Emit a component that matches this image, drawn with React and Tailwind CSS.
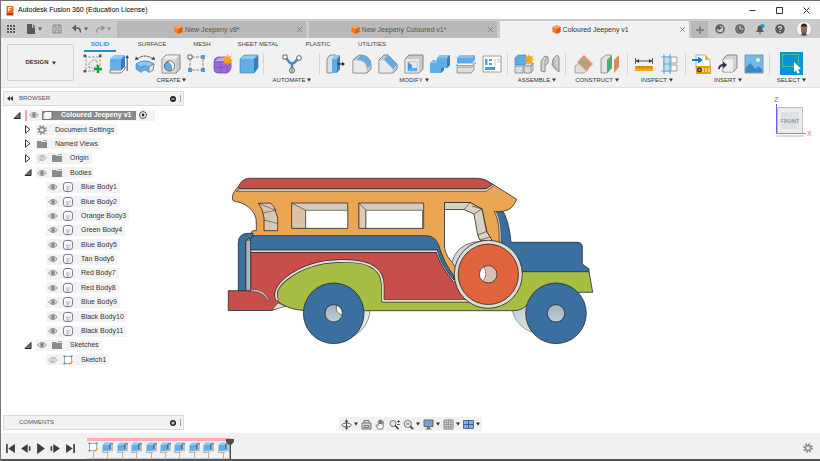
import React from "react";

const BLUE = "#5fade8";
const BLUE_D = "#2f7fc2";
const LINE = "#858585";

function Svg({ size = "w-5 h-5", box = "0 0 20 20", children }) {
  return (
    <svg className={`${size} block shrink-0`} viewBox={box} fill="none" aria-hidden="true">
      {children}
    </svg>
  );
}

function Caret({ className = "text-[#333]" }) {
  return (
    <svg className={`block h-1 w-1 shrink-0 ${className}`} viewBox="0 0 4 4" aria-hidden="true">
      <path d="M0 .5h4L2 3.8z" fill="currentColor" />
    </svg>
  );
}

function Cube({ size = "w-[9px] h-[9px]" }) {
  return (
    <Svg size={size} box="0 0 18 18">
      <path d="M9 0l8 4v10l-8 4-8-4V4z" fill="#f47b20" />
      <path d="M9 0l8 4-8 4-8-4z" fill="#ffa55c" />
      <path d="M9 8l8-4v10l-8 4z" fill="#dd5f0c" />
    </Svg>
  );
}

/* ---------- ribbon icons ---------- */

const icons = {
  sketch: (
    <Svg>
      <path d="M3 1v17M1 3h17M1 17h12M17 1v11" stroke="#909090" strokeWidth=".9" strokeDasharray="3 1" />
      <path d="M.5.5h2.500v2.500H.5zM16 .5h2.500v2.500H16zM.5 16h2.500v2.500H.5z" fill="#555" />
      <path d="M6 14V9l4-3h4v5l-3 3z" fill="#ececec" stroke="#858585" strokeWidth=".8" strokeDasharray="2 1" />
      <path d="M15 11v8M11 15h8" stroke="#18a03c" strokeWidth="2.6" />
    </Svg>
  ),
  extrude: (
    <Svg>
      <path d="M1 16h11l4-4v3l-4 4H1z" fill="#f2f2f2" stroke="#777" strokeWidth=".9" />
      <path d="M1 5h11v11H1z" fill="#62aee9" />
      <path d="M12 5l4-4v11l-4 4z" fill={BLUE_D} />
      <path d="M1 5l4-4h11l-4 4z" fill="#8ac7f4" />
      <path d="M18.200 3v14" stroke="#444" />
      <path d="M16.500 4l1.700-3 1.700 3z" fill="#333" />
    </Svg>
  ),
  revolve: (
    <Svg>
      <path d="M2 5Q10-1 18 5" stroke="#555" strokeDasharray="3 .6" />
      <path d="M0 6l1-3.500 2.700 2.700zM20 6l-1-3.500-2.700 2.700z" fill="#333" />
      <path d="M1 10Q10 4 19 10l-1 6-4 2.500Q10 14 6 18.500L1 15z" fill={BLUE} stroke="#3d82bb" strokeWidth=".6" />
      <path d="M1 10Q10 4 19 10l-5 3Q10 10 6 13z" fill="#8ac7f4" stroke="#3d82bb" strokeWidth=".5" />
      <path d="M14 13l5-3-1 6-4 2.500z" fill="#e9e9e9" stroke="#777" strokeWidth=".7" />
    </Svg>
  ),
  hole: (
    <Svg>
      <path d="M1 5l4-4h14v14l-4 4H1z" fill="#c9c9c9" stroke={LINE} />
      <path d="M1.500 5l3.700-3.500h13L15 5z" fill="#efefef" />
      <path d="M1.500 5.200h13.300v13.300H1.500z" fill="#dedede" />
      <circle cx="8.500" cy="12" r="5" fill={BLUE} stroke="#666" />
      <path d="M8.500 7a5 5 0 015 5 5 5 0 01-3 4.600Q11.500 9 6 8z" fill="#fff" stroke="#666" strokeWidth=".6" />
    </Svg>
  ),
  pattern: (
    <Svg>
      <path d="M5 3h9M3 5v9M5 16h9M16 5v9" stroke="#909090" strokeDasharray="3 1" />
      <path d="M1 1h4v4H1z" fill="#fff" stroke="#666" />
      <path d="M14 1h4v4h-4zM1 14h4v4H1zM14 14h4v4h-4z" fill="#4c9ee0" />
    </Svg>
  ),
  form: (
    <Svg>
      <path d="M1 8q0-4 4-5h7q5 1 6 5v6q-1 4-4 5H5q-4 0-4-4z" fill="#9a6bd6" stroke="#6b3fa8" strokeWidth=".7" />
      <path d="M2 8q3-4.500 6-4.500h5Q16 4 17 6l-3 2.500Q8 7 2 8z" fill="#c3a3ee" />
      <path d="M2 8q7-1 12 .5V18M8 7.500V19M1.500 13q7 1 12.500 0l3.500-2.500" stroke="#7c4fc0" strokeWidth=".8" />
      <path d="M14.500 0l1.200 3L18.500 1.700 17.400 4.600 20.200 6l-2.900 1.200 1.200 3-3-1.400-1.200 2.900-1.200-2.900-2.900 1.300 1.300-2.900L8.700 6l2.800-1.300-1.200-3 3 1.300z" fill="#f9a51a" />
    </Svg>
  ),
  box: (
    <Svg>
      <path d="M1 5l4-4h14l-4 4z" fill="#8ac7f4" />
      <path d="M15 5l4-4v13l-4 5z" fill={BLUE_D} />
      <path d="M1 5h14v14H1z" fill="#62aee9" />
      <path d="M1 5l4-4h14v13l-4 5H1z" stroke="#3d82bb" strokeWidth=".6" />
    </Svg>
  ),
  automate: (
    <Svg>
      <path d="M4 4l4 5h4l4-4M10 9v5" stroke="#4d8fc2" strokeWidth="2.600" />
      <path d="M1 1h4v4H1z" fill="#fff" stroke="#666" />
      <circle cx="17" cy="4" r="2.400" fill="#fff" stroke="#666" />
      <circle cx="10" cy="16.500" r="2.600" fill="#ddd" stroke="#666" />
      <circle cx="10" cy="16.500" r=".9" fill="#666" />
    </Svg>
  ),
  press: (
    <Svg>
      <path d="M1 5l3-4h6v14l-4 4H1z" fill="#dedede" stroke={LINE} strokeWidth=".9" />
      <path d="M6 5l3-4h5l-3 4z" fill="#8ac7f4" />
      <path d="M6 5h5v14H6z" fill={BLUE} />
      <path d="M11 5l3-4v14l-3 4z" fill={BLUE_D} />
      <path d="M12 10h5" stroke="#222" strokeWidth="1.200" />
      <path d="M16 8l3 2-3 2z" fill="#222" />
    </Svg>
  ),
  fillet: (
    <Svg>
      <path d="M1 6l6-5q12 0 12 10v4l-4 4H1z" fill="#c9c9c9" stroke={LINE} />
      <path d="M1.500 6.500h3.500q9 1 9.500 8V18.500H1.500z" fill="#e9e9e9" />
      <path d="M9 1q10 1 10 10l-4 3Q15 6 5 5.500z" fill={BLUE} />
    </Svg>
  ),
  chamfer: (
    <Svg>
      <path d="M1 6l5-5h4l9 9v5l-4 4H1z" fill="#c9c9c9" stroke={LINE} />
      <path d="M1.500 6.500H6l8.500 8v4h-13z" fill="#e9e9e9" />
      <path d="M6 5l4-4 9 9-4 5z" fill={BLUE} />
    </Svg>
  ),
  shell: (
    <Svg>
      <path d="M1 5l4-4h14v14l-4 4H1z" fill="#c9c9c9" stroke={LINE} />
      <path d="M1.500 5h13.500v13.500H1.500z" fill="#ebebeb" />
      <path d="M4 8h9v9H4z" fill="#fff" stroke="#888" strokeWidth=".6" />
      <path d="M4 8l4 3v3l-4 3z" fill="#4796d8" />
      <path d="M4 17l4-3h5v3z" fill={BLUE} />
      <path d="M8 8h5v6H8z" fill="#d7ebfb" />
    </Svg>
  ),
  combine: (
    <Svg>
      <path d="M7 4l3-3h10v10l-3 3h-3v2l-3 3H0V9l3-3h4z" fill={BLUE} />
      <path d="M7 4l3-3h10l-3 3zM0 9l3-3h4v3z" fill="#84c1f0" />
      <path d="M17 4l3-3v10l-3 3zM11 14h3v2l-3 3z" fill={BLUE_D} />
    </Svg>
  ),
  split: (
    <Svg>
      <path d="M1 13h14l3-2v5l-3 3H1z" fill="#ddd" stroke={LINE} strokeWidth=".8" />
      <path d="M1 4l3-3h15v5l-3 3H1z" fill={BLUE} />
      <path d="M1 4l3-3h15l-3 3z" fill="#84c1f0" />
      <path d="M0 11.500l3-2.500h17l-4 2.500z" fill="#fff" stroke="#4c9ee0" strokeWidth=".8" />
    </Svg>
  ),
  params: (
    <Svg>
      <path d="M1 2h18v16H1z" fill="#fff" stroke="#9a9a9a" />
      <path d="M3 5h2.500v6H3zM7 5h3v2H7zM7 9h3v2H7zM3 13h10v3H3z" fill="#4c9ee0" />
      <path d="M13 5v6M15 5h2v3h-2" stroke="#c4c4c4" />
    </Svg>
  ),
  newComponent: (
    <Svg>
      <path d="M1 4l3-3h8v8l-2 2H1z" fill={BLUE} stroke={BLUE_D} strokeWidth=".6" />
      <path d="M1 12h8v7H1zM10 12h7v7h-7zM10 12l2-3h7l-2 3M17 12l2-3v7l-2 3" fill="#dcdcdc" stroke={LINE} strokeWidth=".8" />
      <path d="M15 0l1.200 2.800L19 1.500 18 4.300l2 1.200-2 1 1 3-3-1.500L15 10l-1.300-2L11 9.200l1-2.700-2-1 2-1L11 1.500l2.800 1.300z" fill="#f9a51a" />
    </Svg>
  ),
  joint: (
    <Svg>
      <path d="M1 7l4-5 3 1v6l-3 3v6l-4-1zM19 18l-4-3-3-4 1-6 4-4 2 2z" fill="#d0d0d0" stroke={LINE} strokeWidth=".9" />
      <path d="M5 12V6l3-3M14 5v7l5 4" stroke="#9a9a9a" strokeWidth=".8" />
    </Svg>
  ),
  plane: (
    <Svg>
      <path d="M1 12l5-4h8v8l-4 3H1z" fill="#dedede" stroke="#999" strokeWidth=".8" />
      <path d="M3 8l7-7 9 9-7 7z" fill="#dd8c5e" fillOpacity=".9" />
      <path d="M5 9l4-4 4 4v4z" fill="#8db48d" />
    </Svg>
  ),
  midplane: (
    <Svg>
      <path d="M1 5l5-4h5v13l-4 5H1z" fill="#e4e4e4" stroke={LINE} strokeWidth=".8" />
      <path d="M7 6l5-5v13l-5 5z" fill="#4cae72" />
      <path d="M14 6l5-5v12l-5 6z" fill="#dd8c5e" />
    </Svg>
  ),
  measure: (
    <Svg>
      <path d="M1.500 4v6M18.500 4v6M2 7h16" stroke="#444" strokeWidth=".9" />
      <path d="M2 7l3-2v4zM18 7l-3-2v4z" fill="#333" />
      <path d="M1 12h18v5H1z" fill="#f4a61d" />
      <path d="M3 12v2M5 12v3M7 12v2M9 12v3M11 12v2M13 12v3M15 12v2M17 12v3" stroke="#8a5f0a" strokeWidth=".6" />
    </Svg>
  ),
  interference: (
    <Svg>
      <path d="M3 2h7v16H3z" fill="#bfe0f8" />
      <path d="M1 3h10M1 17h10M4 0v20M10 0v20M3 10h8" stroke="#5aa9e0" strokeWidth="1.100" />
      <path d="M11 3h6v6h-6zM11 11h6v6h-6z" fill="#f6f6f6" stroke="#999" strokeWidth=".9" />
    </Svg>
  ),
  svgIn: (
    <Svg>
      <path d="M4 1h9l5 5v9H4z" fill="#fff" stroke="#999" strokeWidth=".8" />
      <path d="M13 1v5h5z" fill="#f4b400" />
      <path d="M4 12h15v8H4z" fill="#e99d13" />
      <circle cx="7.500" cy="16" r="1.800" stroke="#333" strokeWidth="1.300" />
      <path d="M11 14v4M14 14v4M17 14v4" stroke="#fff" />
      <path d="M0 6h7" stroke="#0f7fd0" strokeWidth="2" />
      <path d="M6 2.500L11 6 6 9.500z" fill="#0f7fd0" />
    </Svg>
  ),
  insertMesh: (
    <Svg>
      <path d="M5 5l4-4h10v13l-4 4H5z" fill="#d2d2d2" stroke={LINE} />
      <path d="M5.500 5.300H15v12.400H5.500z" fill="#eee" />
      <path d="M1 15q0-4 5-4" stroke="#333" strokeWidth="1.800" />
      <path d="M5 7.500l4 3.500-4 3.500z" fill="#333" />
    </Svg>
  ),
  canvas: (
    <Svg>
      <path d="M1 1h18v18H1z" fill="#74b9ee" stroke="#8a98a5" />
      <path d="M1.500 14l5-5 5 6 3-3 4 4v2.500h-17z" fill="#3d86c2" />
      <circle cx="14" cy="6" r="2" fill="#fff6c0" />
    </Svg>
  ),
};

const groups = [
  { name: "CREATE", w: "w-[185px]", items: ["sketch", "extrude", "revolve", "hole", "pattern", "form", "box"] },
  { name: "AUTOMATE", w: "w-14", items: ["automate"] },
  { name: "MODIFY", w: "w-[188px]", items: ["press", "fillet", "chamfer", "shell", "combine", "split", "params"] },
  { name: "ASSEMBLE", w: "w-[58px]", items: ["newComponent", "joint"] },
  { name: "CONSTRUCT", w: "w-[62px]", items: ["plane", "midplane"] },
  { name: "INSPECT", w: "w-[58px]", items: ["measure", "interference"] },
  { name: "INSERT", w: "w-[84px]", items: ["svgIn", "insertMesh", "canvas"] },
];

function RibbonGroup({ name, w, items }) {
  return (
    <div className={`${w} flex shrink-0 flex-col items-center`}>
      <div className="flex h-[22px] w-full justify-center border-r border-[#d6d6d6]">
        {items.map((id) => (
          <button key={id} aria-label={id} className="flex w-[26px] items-center justify-center">
            {icons[id]}
          </button>
        ))}
      </div>
      <GroupLabel name={name} />
    </div>
  );
}

function GroupLabel({ name }) {
  return (
    <button className="flex h-[10px] items-center gap-[2px] whitespace-nowrap text-[6px] leading-[10px] text-[#333]">
      {name}
      <Caret />
    </button>
  );
}

/* ---------- title and tabs ---------- */

function TitleBar() {
  return (
    <header className="flex h-[19px] shrink-0 items-center border-t border-[#6d6d6d] bg-white pl-[5px]">
      <Svg size="w-2 h-[11px]" box="0 0 16 22">
        <path d="M1 2h14v14H1z" fill="#f26b1d" />
        <path d="M1 16h14v5H1z" fill="#b9430a" />
        <path d="M5 13V5h6M5 9h5" stroke="#fff" strokeWidth="2" />
      </Svg>
      <h1 className="ml-1 flex-1 text-[7px] leading-3 text-black">Autodesk Fusion 360 (Education License)</h1>
      <div className="flex items-center gap-5 pr-[10px]">
        <button aria-label="Minimize">
          <Svg size="w-[7px] h-[7px]" box="0 0 7 7"><path d="M.5 3.500h6" stroke="#333" /></Svg>
        </button>
        <button aria-label="Maximize">
          <Svg size="w-[7px] h-[7px]" box="0 0 7 7"><path d="M.5.5h6v6h-6z" stroke="#333" /></Svg>
        </button>
        <button aria-label="Close">
          <Svg size="w-[7px] h-[7px]" box="0 0 7 7"><path d="M.5.5l6 6M6.500.5l-6 6" stroke="#333" /></Svg>
        </button>
      </div>
    </header>
  );
}

function QuickAccess() {
  return (
    <div className="flex w-[116px] shrink-0 items-center gap-[10px] pl-[5px] text-[#5a5a5a]">
      <button aria-label="Data panel">
        <Svg size="w-[10px] h-[10px]" box="0 0 10 10">
          <path d="M1 1h2v2H1zM4 1h2v2H4zM7 1h2v2H7zM1 4h2v2H1zM4 4h2v2H4zM7 4h2v2H7zM1 7h2v2H1zM4 7h2v2H4zM7 7h2v2H7z" fill="currentColor" />
        </Svg>
      </button>
      <button aria-label="File" className="flex items-center gap-[2px]">
        <Svg size="w-[10px] h-[10px]" box="0 0 10 10">
          <path d="M1 0h5v3.500h3V10H1z" fill="currentColor" />
          <path d="M7 0l2.300 2.700H7z" fill="currentColor" />
        </Svg>
        <Caret className="text-[#5a5a5a]" />
      </button>
      <button aria-label="Save">
        <Svg size="w-[10px] h-[10px]" box="0 0 10 10">
          <path d="M1 1h8v8H1zM3 1v3h4V1M3 9V6h4v3" stroke="#8a8a8a" />
        </Svg>
      </button>
      <div className="flex items-center gap-[7px]">
        <button aria-label="Undo" className="flex items-center gap-[2px]">
          <Svg size="w-[10px] h-[10px]" box="0 0 10 10">
            <path d="M2 4h3q3.500 0 3.500 4.500" stroke="currentColor" strokeWidth="1.400" />
            <path d="M0 4l4-3.500v7z" fill="currentColor" />
          </Svg>
          <Caret className="text-[#5a5a5a]" />
        </button>
        <button aria-label="Redo" className="flex items-center gap-[2px]">
          <Svg size="w-[10px] h-[10px]" box="0 0 10 10">
            <path d="M8 4H5Q1.500 4 1.500 8.500" stroke="#8e8e8e" strokeWidth="1.200" />
            <path d="M10 4L6.500 1v6z" fill="#8e8e8e" />
          </Svg>
          <Caret className="text-[#8e8e8e]" />
        </button>
      </div>
    </div>
  );
}

function DocTab({ title, active }) {
  return (
    <div className={`flex min-w-0 flex-1 items-center rounded-t-[1px] pr-1 ${active ? "bg-[#f1f1f1] text-[#333]" : "bg-[#b9b9b9] text-[#555]"}`}>
      <button className="flex min-w-0 flex-1 items-center justify-center gap-[2px]">
        <Cube />
        <span className="truncate text-[7px] leading-[10px]">{title}</span>
      </button>
      <button aria-label={`Close ${title}`}>
        <Svg size="w-[5px] h-[5px]" box="0 0 5 5"><path d="M.3.3l4.400 4.400M4.700.3L.3 4.700" stroke="#777" strokeWidth=".9" /></Svg>
      </button>
    </div>
  );
}

function AccountBar() {
  const c = "w-[10px] h-[10px]";
  return (
    <div className="flex w-[131px] shrink-0 items-center pl-[2px]">
      <button aria-label="New document" className="mr-[7px] mt-[2px] flex h-[17px] w-[17px] items-center justify-center bg-[#b9b9b9]">
        <Svg size="w-2 h-2" box="0 0 8 8"><path d="M4 0v8M0 4h8" stroke="#777" strokeWidth="1.400" /></Svg>
      </button>
      <div className="flex items-center gap-[10px]">
        <button aria-label="Extensions">
          <Svg size={c} box="0 0 10 10">
            <circle cx="5" cy="5" r="4" stroke="#5a5a5a" strokeWidth="1.500" />
            <path d="M3 1l4 3-3 2-3-2zM5 4l3-2" fill="#5a5a5a" />
          </Svg>
        </button>
        <button aria-label="Job status">
          <Svg size={c} box="0 0 10 10">
            <circle cx="5" cy="5" r="4.800" fill="#5a5a5a" />
            <path d="M5 2v3h3" stroke="#ddd" strokeWidth="1.200" />
            <circle cx="5" cy="5" r="3.300" stroke="#bbb" strokeWidth=".5" />
          </Svg>
        </button>
        <button aria-label="Notifications">
          <Svg size={c} box="0 0 10 10">
            <path d="M1 8l1.500-2V4q0-2.500 2.500-2.800Q7.500 2 7.500 4v2L9 8zM4 8.500h2v1.300H4z" fill="#5a5a5a" />
            <circle cx="7.500" cy="2" r="2" fill="#0f96e0" />
          </Svg>
        </button>
        <button aria-label="Help">
          <Svg size={c} box="0 0 10 10">
            <circle cx="5" cy="5" r="4.800" fill="#5a5a5a" />
            <path d="M3.500 4Q3.500 2.500 5 2.500T6.500 4Q6.500 4.800 5 5.300V6M5 7v1.200" stroke="#eee" strokeWidth="1.100" />
          </Svg>
        </button>
        <button aria-label="Account" className="ml-[2px]">
          <Svg size="w-[14px] h-[14px]" box="0 0 14 14">
            <circle cx="7" cy="7" r="7" fill="#f7f7f7" />
            <path d="M3 13q4-3 8 0l-4 1z" fill="#555" />
            <ellipse cx="7" cy="7.200" rx="3" ry="4.300" fill="#9a6a50" />
            <path d="M3.800 6Q3.500 1.500 7 1.500T10.200 6L9.500 4.500h-5z" fill="#33231c" />
            <path d="M4.300 8.500Q7 14 9.700 8.500l-.5 3L7 12.500 4.800 11.500z" fill="#4b3026" />
          </Svg>
        </button>
      </div>
    </div>
  );
}

function Ribbon() {
  const tabs = [
    ["SOLID", "w-[32px]"],
    ["SURFACE", "w-[72px]"],
    ["MESH", "w-[28px]"],
    ["SHEET METAL", "w-[84px]"],
    ["PLASTIC", "w-[36px]"],
    ["UTILITIES", "w-[72px]"],
  ];
  return (
    <div className="flex h-[50px] shrink-0 border-b border-[#e2e2e2] bg-[#f1f1f1]">
      <button className="ml-[6px] mt-[6px] flex h-[37px] w-[67px] shrink-0 items-center justify-center gap-[3px] rounded-[2px] border border-[#d2d2d2] text-[6px] font-bold text-[#333]">
        DESIGN
        <Caret />
      </button>
      <div className="ml-[5px] flex min-w-0 flex-1 flex-col">
        <nav className="flex h-[14px] pl-[5px]" aria-label="Workspaces">
          {tabs.map(([t, w], i) => (
            <button
              key={t}
              className={`${w} flex h-[14px] shrink-0 justify-center whitespace-nowrap pt-px text-[6px] leading-[10px] ${
                i === 0 ? "border-b-2 border-[#1e94cf] font-bold text-[#1e94cf]" : "text-[#444]"
              }`}
            >
              {t}
            </button>
          ))}
        </nav>
        <div className="mt-px flex">
          {groups.map((g) => (
            <RibbonGroup key={g.name} {...g} />
          ))}
          <div className="flex w-[43px] shrink-0 flex-col items-center">
            <button aria-label="Select tool" className="-mt-px flex h-[23px] w-[23px] items-center justify-center bg-[#0a93d6]">
              <Svg size="w-[23px] h-[23px]" box="0 0 23 23">
                <path d="M2.500 2.500h16v12h-16z" stroke="#62d07a" strokeDasharray="2 1" />
                <path d="M14 10l7 7-3 .3 1.600 3.500-2 1-1.600-3.600-2 2z" fill="#fff" />
              </Svg>
            </button>
            <GroupLabel name="SELECT" />
          </div>
        </div>
      </div>
    </div>
  );
}

/* ---------- browser tree ---------- */

function Eye({ off }) {
  return (
    <Svg size="w-[10px] h-[8px]" box="0 0 10 8">
      <path d="M.6 4Q5-1.200 9.400 4 5 9.200.6 4z" fill={off ? "none" : "#e2e2e2"} stroke={off ? "#b5b5b5" : "#979797"} />
      <circle cx="5" cy="4" r="1.900" fill={off ? "#e5e5e5" : "#868686"} stroke={off ? "#b0b0b0" : "none"} strokeWidth=".6" />
      {off && <path d="M2 7.500L8 .5" stroke="#b5b5b5" strokeWidth=".8" />}
    </Svg>
  );
}

function Folder() {
  return (
    <Svg size="w-[10px] h-[8px]" box="0 0 10 8">
      <path d="M0 1h4l1 1h5v6H0z" fill="#8b8b8b" />
      <path d="M5.500.2H10v1H6.300z" fill="#9d9d9d" />
    </Svg>
  );
}

function Gear({ size = "w-[10px] h-[10px]" }) {
  return (
    <Svg size={size} box="0 0 10 10">
      <circle cx="5" cy="5" r="3.900" stroke="#8a8a8a" strokeWidth="1.900" strokeDasharray="1.530 1.530" />
      <circle cx="5" cy="5" r="2.500" stroke="#8a8a8a" strokeWidth="1.400" />
    </Svg>
  );
}

function BodyIcon() {
  return (
    <Svg size="w-[10px] h-[10px]" box="0 0 10 10">
      <rect x=".5" y=".5" width="9" height="9" rx="2.500" fill="#fff" stroke="#7a8090" />
      <path d="M3 4h3v5H3z" fill="#c9d0da" />
      <path d="M6 3h2v5.500H6z" fill="#e3e7ec" />
    </Svg>
  );
}

function SketchIcon({ size = "w-[10px] h-[10px]" }) {
  return (
    <Svg size={size} box="0 0 10 10">
      <path d="M1.500 1.500h7v7h-7z" fill="#fff" stroke="#999" strokeWidth=".8" />
      <path d="M.5.5h1.800v1.800H.5zM7.700.5h1.800v1.800H7.700zM.5 7.700h1.800v1.800H.5z" fill="#3e8fd0" />
      <path d="M5.500 9.700l3.500-4.200 1 1-3 3.200z" fill="#f09a2a" />
    </Svg>
  );
}

function Arrow({ open }) {
  return (
    <Svg size="w-2 h-[9px]" box="0 0 8 9">
      {open ? (
        <path d="M7 1.500v6H1z" fill="#777" stroke="#222" />
      ) : (
        <path d="M1.500.8v7.400L6 4.500z" fill="#fff" stroke="#333" />
      )}
    </Svg>
  );
}

const bodies = [
  "Blue Body1", "Blue Body2", "Orange Body3", "Green Body4", "Blue Body5", "Tan Body6",
  "Red Body7", "Red Body8", "Blue Body9", "Black Body10", "Black Body11",
];

function Branch({ open, eye, icon, label }) {
  return (
    <li className="flex items-center gap-1 pl-6">
      <button aria-label={`Toggle ${label}`}><Arrow open={open} /></button>
      <button className="flex h-[11px] items-center gap-[5px] bg-[#f3f3f3] pl-px pr-[3px]">
        {eye}
        {icon}
        <span className="pl-[3px]">{label}</span>
      </button>
    </li>
  );
}

function Leaf({ icon, label, off }) {
  return (
    <li className="flex items-center pl-[46px]">
      <button className="flex h-[11px] items-center gap-[5px] bg-[#f3f3f3] pl-[2px] pr-[3px]">
        <Eye off={off} />
        {icon}
        <span className="pl-[3px]">{label}</span>
      </button>
    </li>
  );
}

function PanelHeader({ title, browser }) {
  return (
    <div className="flex h-[15px] w-[181px] items-center border border-[#dcdcdc] bg-[#f2f2f2] pl-[3px] text-[6px] text-[#555]">
      <span className="w-3">
        {browser && (
          <Svg size="w-[6px] h-[5px]" box="0 0 6 5"><path d="M3 0v5L0 2.500zM6 0v5L3 2.500z" fill="#333" /></Svg>
        )}
      </span>
      <h2 className="flex-1">{title}</h2>
      <button aria-label={`${title} options`} className="mr-1">
        <Svg size="w-[6px] h-[6px]" box="0 0 6 6">
          <circle cx="3" cy="3" r="3" fill="#222" />
          <path d={browser ? "M1.300 3h3.400" : "M1.300 3h3.400M3 1.300v3.400"} stroke="#fff" strokeWidth=".9" />
        </Svg>
      </button>
      <span className="mr-px h-[7px] w-[2px] border-l border-[#999]" />
    </div>
  );
}

function Browser() {
  return (
    <aside className="col-start-1 row-start-1 flex flex-col justify-self-start pl-[2px] pt-[3px] pb-[3px] text-[#333]">
      <PanelHeader title="BROWSER" browser />
      <ul className="-ml-[3px] mt-[2px] grid h-[259px] auto-rows-fr text-[7px] leading-[10px]">
        <li className="flex items-center gap-1 pl-[13px]">
          <button aria-label="Toggle Coloured Jeepeny v1"><Arrow open /></button>
          <div className="flex h-[11px] items-center border-l-2 border-[#f3a3a3] bg-[#f3f3f3] pl-[2px] pr-2">
            <button aria-label="Visibility"><Eye /></button>
            <button className="ml-[3px] flex h-[9px] items-center bg-[#8a8a8a] pr-[5px] font-bold text-white">
              <Svg size="w-[11px] h-[9px]" box="0 0 11 9">
                <path d="M1 2.500L3.500.5H10v6L8 8.500H1z" fill="#f4f4f4" stroke="#555" strokeWidth=".7" />
              </Svg>
              <span className="pl-2">Coloured Jeepeny v1</span>
            </button>
            <button aria-label="Activate" className="ml-[3px]">
              <Svg size="w-2 h-2" box="0 0 8 8">
                <circle cx="4" cy="4" r="3.400" fill="#fff" stroke="#333" strokeWidth=".9" />
                <circle cx="4" cy="4" r="1.400" fill="#222" />
              </Svg>
            </button>
          </div>
        </li>
        <Branch icon={<Gear />} label="Document Settings" />
        <Branch icon={<Folder />} label="Named Views" />
        <Branch eye={<Eye off />} icon={<Folder />} label="Origin" />
        <Branch open eye={<Eye />} icon={<Folder />} label="Bodies" />
        {bodies.map((b) => (
          <Leaf key={b} icon={<BodyIcon />} label={b} />
        ))}
        <Branch open eye={<Eye />} icon={<Folder />} label="Sketches" />
        <Leaf off icon={<SketchIcon />} label="Sketch1" />
      </ul>
      <div className="flex-1" />
      <PanelHeader title="COMMENTS" />
    </aside>
  );
}

/* ---------- model ---------- */

function Jeepney() {
  const edge = "#2a2a2a";
  return (
    <svg className="block w-[368px]" viewBox="227 177 368 168" stroke={edge} strokeWidth=".8" strokeLinejoin="round" role="img" aria-label="Jeepney model">
      <defs>
        <linearGradient id="far" x1="0" y1="0" x2="1" y2="1">
          <stop offset="0" stopColor="#aebcc4" />
          <stop offset="1" stopColor="#f4f6f7" />
        </linearGradient>
        <linearGradient id="hub" x1="0" y1="0" x2="0" y2="1">
          <stop offset="0" stopColor="#9fb3bf" />
          <stop offset="1" stopColor="#c3cdd2" />
        </linearGradient>
        <linearGradient id="tan" x1="0" y1="0" x2="1" y2="0">
          <stop offset="0" stopColor="#d8bfa3" />
          <stop offset="1" stopColor="#dccbb8" />
        </linearGradient>
      </defs>
      <circle cx="340" cy="309" r="30" fill="url(#far)" strokeWidth=".5" />
      <circle cx="541" cy="304" r="29.500" fill="url(#far)" strokeWidth=".4" />

      {/* hood and windscreen post */}
      <path d="M494.300 211.700H503.300C508 220 510 232 511 242.300H577Q582.300 242.300 582.300 247V264L589 269V272.500H490V242Z" fill="#39709f" />

      {/* orange cabin */}
      <path d="M238 187C234 191 232 195 232.500 199 233 201.500 235 201.500 238 202 248 204 256.500 213 256.300 222V230.700H253Q251 231 251.500 234V237H426C434 237 438 245 440 251 444 262 449 271 456 281L499.300 245V235C499.300 226 498 218 494.300 211.700 501 212 507 211 511 208Q515 204 516.700 199.300L494 185 485 180Z" fill="#eba654" />
      <path d="M494.300 211.700C498 218 499.300 226 499.300 235V245H501V235C501 226 499.500 218 496.300 211.700Z" fill="#e6e2da" strokeWidth=".5" />
      <path d="M240 188.700H486L492.700 184.300 494.300 185.300 486 191.300H236Z" fill="#dedbd2" strokeWidth=".6" />
      <path d="M238.300 187.500C240 182 244 178.300 250 178.300H476.700C484 178.300 488 181.500 492.700 184.300L486 188.700H240Z" fill="#c84e49" />

      {/* side windows */}
      <path d="M258.300 203.300L270 203Q275 206 275.700 212L277.700 218V230.700H264V218Q263 209 258.300 203.300Z" fill="url(#tan)" />
      <path d="M258.300 203.300L275 210M263 213L276.500 210M264 220L277.700 223.500" fill="none" strokeWidth=".5" />
      <path d="M291.700 203H347.700V228.300H291.700Z" fill="#d5cabc" />
      <path d="M291.700 203L305.700 210.300V228.300H291.700Z" fill="#dcc3a8" strokeWidth=".6" />
      <path d="M305.700 210.300H347.700V228.300H305.700Z" fill="#fff" strokeWidth=".6" />
      <path d="M359 203H423.700V228.300H359Z" fill="#d5cabc" />
      <path d="M359 203L366 210.300V228.300H359Z" fill="#dccab6" strokeWidth=".6" />
      <path d="M366 210.300H422.500V228.300H366Z" fill="#fff" strokeWidth=".6" />

      {/* door opening */}
      <path d="M444.500 202.500H470L482 209 487 232 492 242 488 275H470L452 262C448 258 444.500 252 444.500 246Z" fill="#fff" />
      <path d="M452 262Q456 246 474 242L488 241 482 262 457 270Z" fill="#d3d8da" strokeWidth=".6" />
      <path d="M457 268Q460 252 478 244" fill="none" stroke="#fff" strokeWidth="1.500" />
      <path d="M444.500 202.500H470L482 209 486.500 231.500 491.500 239V242L480 240.500 477.500 234 474 214 464 209.500H444.500Z" fill="#dbd0c1" />
      <path d="M470 202.500L464 209.500M482 209L474 214M486.500 231.500L477.500 235M482 209L472 206M490 237L480 240" fill="none" strokeWidth=".6" />

      {/* lower red panels */}
      <path d="M250.700 251H437C440 262 446 272 455 281.700L468 300V303H383L283 306 271.700 310.500H228.300V290.700H250.700Z" fill="#c84e49" />
      <path d="M250 289.500Q264 288 269.300 300L267.500 300.500Q263 291 250 291.500Z" fill="#c9b9b2" strokeWidth=".5" />
      <path d="M271.700 310.300L278 303 286 306Z" fill="#e0ddd6" strokeWidth=".5" />

      {/* blue band and bumper */}
      <path d="M250.700 251H437.300C440.500 262 446 271 454.500 281" fill="none" strokeWidth="3.400" />
      <path d="M250.700 251H437.300C440.500 262 446 271 454.500 281" fill="none" stroke="#dedbd2" strokeWidth="2" />
      <path d="M250 235.700H426.700C433 236 436.500 240 438.500 245 442 256 447 267 454 276V280C446 271 440.500 262 437.300 250H250Z" fill="#39709f" />
      <path d="M245.700 240H250.700V290.700H245.700Z" fill="#a9b6be" />
      <path d="M238.300 290.700V243Q238.500 233.300 248 233.300H253V236L250.700 238.300Q246 239 245.700 243V290.700Z" fill="#39709f" />

      {/* green chassis */}
      <path d="M277.300 300C274 294 277 286 286.700 278.300 300 268 318 261.500 340 261 352 260.500 366 262 374 267.500 381 273 382.700 279 382.700 285V301.500H500L521.700 271.700H589L592.700 292.300H580L526.700 305Q522 310.700 513.300 310.700H310C296 310.700 282 307 277.300 300Z" fill="#a6be44" />
      <path d="M277.300 300C274 294 277 286 286.700 278.300 300 268 318 261.500 340 261 352 260.500 366 262 374 267.500 381 273 382.700 279 382.700 285V300.700H472" fill="none" strokeWidth="3.400" />
      <path d="M277.300 300C274 294 277 286 286.700 278.300 300 268 318 261.500 340 261 352 260.500 366 262 374 267.500 381 273 382.700 279 382.700 285V300.700H472" fill="none" stroke="#e3e0d6" strokeWidth="2" />

      {/* wheels */}
      <circle cx="333.700" cy="313.300" r="30.300" fill="#39709f" />
      <circle cx="333.700" cy="313.300" r="8.700" fill="url(#hub)" />
      <path d="M336.500 305.200A8.700 8.700 0 01342.200 315Q335 313 336.500 305.200Z" fill="#fff" strokeWidth=".6" />
      <circle cx="556" cy="313.300" r="30.300" fill="#39709f" />
      <circle cx="556" cy="313.300" r="8.700" fill="url(#hub)" />
      <circle cx="488.300" cy="274.300" r="34" fill="#dedbd2" />
      <circle cx="488.300" cy="274.300" r="30.200" fill="#e0643e" />
      <circle cx="488.300" cy="274.300" r="8.700" fill="#d9c0b4" />
      <path d="M483.500 267A8.700 8.700 0 00483 281.200Q488.500 274 483.500 267Z" fill="#fff" strokeWidth=".5" />
    </svg>
  );
}

function ViewCube() {
  return (
    <button aria-label="View cube, front" className="col-start-1 row-start-1 mt-[7px] mr-[7px] self-start justify-self-end">
      <svg className="block h-11 w-10" viewBox="0 0 40 44" aria-hidden="true">
        <path d="M2 40h30l-2 2H4z" fill="#dcdcdc" />
        <path d="M4.500 12.500h25v26h-25z" fill="#ededed" stroke="#bcbcbc" />
        <path d="M8 17h18v17H8z" fill="#dde1e4" />
        <path d="M3.500 9v30" stroke="#6a63f2" />
        <path d="M3 38.500h30" stroke="#ee6a6a" />
        <text x="17" y="28" textAnchor="middle" fontFamily="Roboto, sans-serif" fontSize="6" fill="#7e868c">FRONT</text>
        <text x="1" y="7" fontFamily="Liberation Sans, sans-serif" fontSize="7" fill="#6a63f2">Z</text>
        <text x="34" y="41" fontFamily="Liberation Sans, sans-serif" fontSize="7" fill="#ee6a6a">X</text>
      </svg>
    </button>
  );
}

function NavBar() {
  const s = "w-[11px] h-[11px]";
  const b = "0 0 11 11";
  const tools = [
    ["Orbit", true, <Svg size={s} box={b}><ellipse cx="5.500" cy="6" rx="4.800" ry="2" stroke="#666" /><path d="M5.500 1v9" stroke="#444" /><path d="M3.800 3l1.700-3 1.700 3zM3.800 8.500l1.700 2.500 1.700-2.500z" fill="#444" /></Svg>],
    ["Look at", false, <Svg size={s} box={b}><path d="M1 4h9v6H1zM3 4V1.500h5V4M3 6.500h5v2H3z" fill="#ddd" stroke="#666" strokeWidth=".9" /></Svg>],
    ["Pan", false, <Svg size={s} box={b}><path d="M3 10L.8 6.500l1-.7L3.200 7V2.200h1.200V5 1h1.300v4V1.500H7V5.300 2.700h1.300V7L7.500 10z" fill="#fff" stroke="#555" strokeWidth=".7" /></Svg>],
    ["Zoom", false, <Svg size={s} box={b}><circle cx="4" cy="4.500" r="3" fill="#dcebe8" stroke="#777" /><path d="M6 6.500L9.500 10" stroke="#444" strokeWidth="1.700" /><path d="M8 2.500h3M9.500 1v3M8 5.500h3" stroke="#444" strokeWidth=".8" /></Svg>],
    ["Fit", true, <Svg size={s} box={b}><circle cx="4.800" cy="4.800" r="3.600" fill="#eee" stroke="#777" /><path d="M3 3.500h3.500v2.500H3z" fill="#aaa" /><path d="M7.300 7.300L10 10" stroke="#444" strokeWidth="1.800" /></Svg>],
    ["Display settings", true, <Svg size={s} box={b}><path d="M1 1h9v6.500H1z" fill="#6fa3dc" stroke="#666" /><path d="M4 8h3v1.500h1.500v1h-6v-1H4z" fill="#777" /></Svg>],
    ["Grid and snaps", true, <Svg size={s} box={b}><path d="M1 1h9v9H1z" fill="#d8d8d8" stroke="#888" /><path d="M3.300 1v9M5.500 1v9M7.700 1v9M1 3.300h9M1 5.500h9M1 7.700h9" stroke="#888" strokeWidth=".7" /></Svg>],
    ["Viewports", true, <Svg size={s} box={b}><path d="M.5 1.500h10v8H.5z" fill="#7fb0e2" stroke="#5d6c80" /><path d="M5.500 1.500v8M.5 5.500h10" stroke="#3e5f8c" /></Svg>],
  ];
  return (
    <div className="col-start-1 row-start-1 mb-[2px] flex h-[14px] items-center gap-[3px] self-end justify-self-center bg-[#f1f1f1] px-[2px]">
      {tools.map(([name, menu, icon]) => (
        <button key={name} aria-label={name} className="flex items-center gap-[2px]">
          {icon}
          {menu && <Caret />}
        </button>
      ))}
    </div>
  );
}

/* ---------- timeline ---------- */

function Timeline() {
  const controls = [
    ["To start", "M1 1h1.500v8H1zM9 1v8L3 5z"],
    ["Step back", "M7 1v8L1 5zM8 3h1.500v4H8z"],
    ["Play", "M2 0v10l7-5z"],
    ["Step forward", "M3 1v8l6-4zM.5 3H2v4H.5z"],
    ["To end", "M1 1v8l6-4zM7.500 1H9v8H7.500z"],
  ];
  return (
    <footer className="flex h-7 shrink-0 justify-between border-b-2 border-[#555] bg-[#f1f1f1]">
      <div className="flex">
        <div className="flex items-center gap-1 pl-1 pt-1">
          {controls.map(([name, d]) => (
            <button key={name} aria-label={name}>
              <Svg size="w-[11px] h-[11px]" box="0 0 10 10"><path d={d} fill="#3c3c3c" /></Svg>
            </button>
          ))}
        </div>
        <div className="ml-[11px] flex w-[144px] flex-col pt-[5px]">
          <div className="h-[3px] bg-[#f9adad]" />
          <div className="grid flex-1 grid-cols-10 border-b border-[#c9c9c9]">
            {Array.from({ length: 10 }, (_, i) => (
              <button key={i} aria-label={i === 0 ? "Sketch feature" : `Extrude feature ${i}`} className="flex flex-col items-start pl-px">
                <span className="pt-px">{i === 0 ? <SketchIcon /> : <Svg size="w-[11px] h-[11px]">{icons.extrude.props.children}</Svg>}</span>
                <span className="ml-[5px] w-px flex-1 bg-[#b5b5b5]" />
              </button>
            ))}
          </div>
        </div>
        <div className="-ml-[5px] pt-[6px]">
          <Svg size="w-2 h-5" box="0 0 8 20">
            <path d="M0 0h8v3L5 6v14H3.500V6L0 3z" fill="#4d4d4d" />
          </Svg>
        </div>
      </div>
      <button aria-label="Timeline settings" className="mr-[7px] mt-1">
        <Gear />
      </button>
    </footer>
  );
}

export default function App() {
  return (
    <div className="flex min-h-screen flex-col overflow-hidden border-l border-[#777] bg-white font-['Liberation_Sans',Arial,sans-serif]">
      <TitleBar />
      <div className="flex h-[19px] shrink-0 bg-[#cbcbcb]">
        <QuickAccess />
        <div className="flex min-w-0 flex-1 gap-[3px] pt-[2px]">
          <DocTab title="New Jeepeny v8*" />
          <DocTab title="New Jeepeny Coloured v1*" />
          <DocTab title="Coloured Jeepeny v1" active />
        </div>
        <AccountBar />
      </div>
      <Ribbon />
      <main className="grid flex-1 grid-cols-1 grid-rows-1">
        <div className="col-start-1 row-start-1 flex items-center justify-center">
          <Jeepney />
        </div>
        <Browser />
        <NavBar />
        <ViewCube />
      </main>
      <Timeline />
    </div>
  );
}
